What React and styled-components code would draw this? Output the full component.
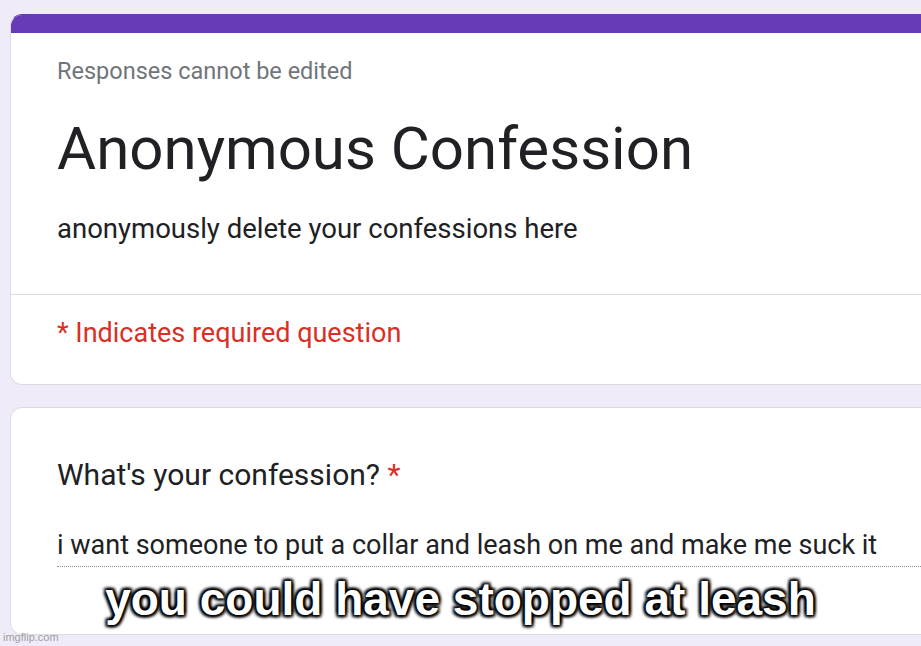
import styled, { createGlobalStyle } from "styled-components";

const GlobalStyle = createGlobalStyle`
  html, body {
    margin: 0;
    padding: 0;
    background: #efebf8;
  }
  body {
    font-family: Roboto, "Noto Sans", Arial, sans-serif;
  }
`;

const Page = styled.div`
  position: relative;
  width: 921px;
  height: 646px;
  overflow: hidden;
  padding: 14px 0 0 10px;
  box-sizing: border-box;
  display: flex;
  flex-direction: column;
  align-items: flex-start;
  gap: 22px;
`;

const Card = styled.div`
  flex: none;
  width: 960px;
  height: ${(p) => p.$height}px;
  background: #fff;
  border: 1px solid #dadce0;
  border-top-color: ${(p) => (p.$accent ? "#673ab7" : "#dadce0")};
  border-radius: 12px;
  overflow: hidden;
  box-sizing: border-box;
`;

const TopBar = styled.div`
  height: 18px;
  background: #673ab7;
`;

const Section = styled.div`
  padding: ${(p) => p.$pad};
  border-top: ${(p) => (p.$divider ? "1px solid #dadce0" : "none")};
`;

const Notice = styled.div`
  font-size: 23.5px;
  line-height: 28px;
  color: #70757a;
`;

const Title = styled.h1`
  margin: 28px 0 0;
  font-size: 60px;
  font-weight: 400;
  line-height: 72px;
  color: #202124;
`;

const Description = styled.div`
  margin-top: 26px;
  font-size: 27.5px;
  line-height: 36px;
  color: #202124;
`;

const Required = styled.div`
  font-size: 27px;
  line-height: 34px;
  color: #d93025;
`;

const Question = styled.div`
  font-size: 30px;
  line-height: 36px;
  color: #202124;
`;

const Star = styled.span`
  color: #d93025;
`;

const Answer = styled.div`
  width: 870px;
  margin-top: 36px;
  font-size: 27px;
  line-height: 32px;
  color: #202124;
  padding-bottom: 5px;
  border-bottom: 1px dotted #8a8f94;
`;

const Caption = styled.div`
  position: absolute;
  left: 0;
  right: 0;
  top: 572px;
  text-align: center;
  font-family: "Liberation Sans", Arial, sans-serif;
  font-weight: 700;
  font-size: 46px;
  line-height: 54px;
  color: #fff;
  text-shadow: 2px 2px 3px #000, -2px -2px 3px #000, 2px -2px 3px #000,
    -2px 2px 3px #000, 0 0 4px #000;
`;

const Watermark = styled.div`
  position: absolute;
  left: 3px;
  bottom: 3px;
  font-family: "Liberation Sans", Arial, sans-serif;
  font-size: 11px;
  color: #a0a0a0;
`;

export default function App() {
  return (
    <>
      <GlobalStyle />
      <Page>
        <Card $accent $height={371}>
          <TopBar />
          <Section $pad="24px 46px 47px">
            <Notice>Responses cannot be edited</Notice>
            <Title>Anonymous Confession</Title>
            <Description>anonymously delete your confessions here</Description>
          </Section>
          <Section $pad="21px 46px 34px" $divider>
            <Required>* Indicates required question</Required>
          </Section>
        </Card>
        <Card $height={228}>
          <Section $pad="49px 46px 0">
            <Question>
              What's your confession? <Star>*</Star>
            </Question>
            <Answer>
              i want someone to put a collar and leash on me and make me suck it
            </Answer>
          </Section>
        </Card>
        <Caption>you could have stopped at leash</Caption>
        <Watermark>imgflip.com</Watermark>
      </Page>
    </>
  );
}
